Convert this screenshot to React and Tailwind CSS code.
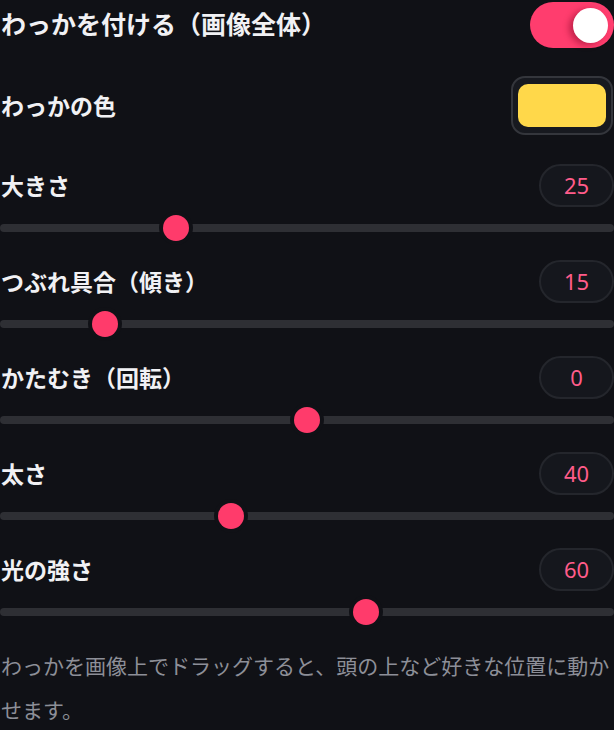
import React, { useState } from 'react';

const JP = { fontFamily: '"Noto Sans CJK JP", "Noto Sans", sans-serif' };

const SLIDERS = [
  { id: 'size', label: '大きさ', value: 25, min: 5, max: 77 },
  { id: 'squash', label: 'つぶれ具合（傾き）', value: 15, min: 5, max: 69 },
  { id: 'rotate', label: 'かたむき（回転）', value: 0, min: -180, max: 180 },
  { id: 'width', label: '太さ', value: 40, min: 10, max: 91 },
  { id: 'glow', label: '光の強さ', value: 60, min: 0, max: 100 },
];

const Slider = ({ label, value, min, max, first }) => {
  const f = (value - min) / (max - min);
  return (
    <div className={first ? 'mt-[29px]' : 'mt-[19px]'}>
      <div className="flex h-[43px] items-center justify-between">
        <span className="text-[23px] font-bold text-[#f1f1f4] pl-[1px]">{label}</span>
        <span
          className="flex h-[43px] w-[75px] items-center justify-center rounded-full border-2 border-[#24262c] bg-[#15171d] text-[22px] text-[#ff5c8a]"
          style={{ fontFamily: '"Noto Sans", sans-serif' }}
        >
          {value}
        </span>
      </div>
      <div className="relative mt-[8px] h-[26px]">
        <div className="absolute left-0 right-0 top-[9px] h-[8px] rounded-full bg-[#2e2f34]" />
        <div
          className="absolute top-0 h-[26px] w-[26px] -translate-x-1/2 rounded-full bg-[#ff3b6b] shadow-[0_0_0_4px_#101116]"
          style={{ left: `calc(13px + (100% - 26px) * ${f})` }}
        />
      </div>
    </div>
  );
};

const App = () => {
  const [on, setOn] = useState(true);

  return (
    <div className="min-h-screen w-[614px] bg-[#101116] text-[#f1f1f4]" style={JP}>
      <div className="flex h-[48px] items-center justify-between">
        <span className="text-[25px] font-bold pl-[1px]">わっかを付ける（画像全体）</span>
        <button
          onClick={() => setOn(!on)}
          className="relative mt-[2px] h-[46px] w-[84px] rounded-full bg-[#ff3d6e]"
        >
          <span className="absolute right-[6px] top-[5.5px] h-[35px] w-[35px] rounded-full bg-white shadow-[-4px_2px_6px_rgba(120,0,30,0.45)]" />
        </button>
      </div>

      <div className="mt-[28px] flex h-[59px] items-center justify-between">
        <span className="text-[23px] font-bold pl-[1px]">わっかの色</span>
        <div className="mr-[1px] flex h-[59px] w-[102px] items-center justify-center rounded-[14px] border-2 border-[#34363c] bg-[#17191f]">
          <div className="h-[43px] w-[88px] rounded-[10px] bg-[#ffd84a]" />
        </div>
      </div>

      {SLIDERS.map((s, i) => (
        <Slider key={s.id} first={i === 0} {...s} />
      ))}

      <p className="mt-[18px] text-[21px] leading-[44px] text-[#8d8f98] pl-[1px]">
        わっかを画像上でドラッグすると、頭の上など好きな位置に動かせます。
      </p>
    </div>
  );
};

export default App;
